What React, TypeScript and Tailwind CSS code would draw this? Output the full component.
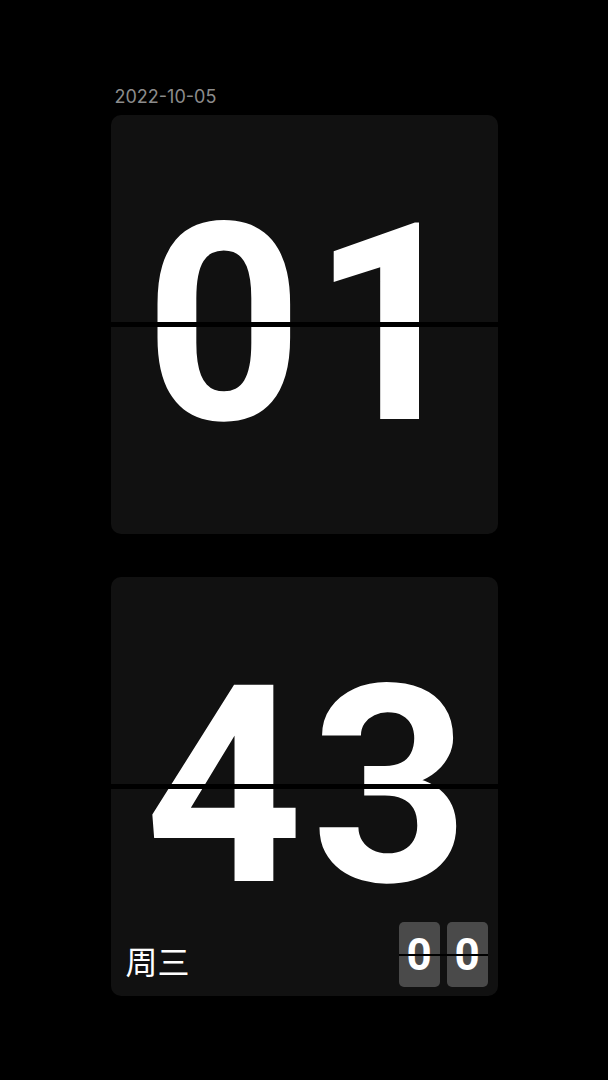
import React from 'react';

const FlipCard = ({ value, children }: { value: string; children?: React.ReactNode }) => (
  <div className="relative flex h-[419px] w-full items-center justify-center overflow-hidden rounded-[10px] bg-[#111111]">
    <span className="pt-[1px] pl-[14px] font-['Roboto',sans-serif] text-[276px] leading-none font-bold tracking-[8px] text-white">
      {value}
    </span>
    <div className="absolute top-[207px] right-0 left-0 h-[5px] bg-black" />
    {children}
  </div>
);

const MiniDigit = ({ value }: { value: string }) => (
  <div className="flex h-[65px] w-[41px] items-center justify-center rounded-[5px] bg-[#4a4a4a]">
    <span className="font-['Roboto',sans-serif] text-[44px] leading-none font-bold text-white">
      {value}
    </span>
  </div>
);

export default function App() {
  return (
    <div className="min-h-[1080px] w-full bg-black pt-[87px]">
      <div className="mx-auto flex w-[387px] flex-col">
        <div className="mb-[8px] ml-[4px] font-['Inter',sans-serif] text-[18px] leading-[20px] text-[#8c8c8c]">
          2022-10-05
        </div>
        <FlipCard value="01" />
        <div className="mt-[43px]">
          <FlipCard value="43">
            <div className="absolute right-[10px] bottom-[9px] left-[15px] flex items-center justify-between">
              <span className="mt-[10px] font-['Noto_Sans_CJK_SC',sans-serif] text-[32px] leading-none text-white">
                周三
              </span>
              <div className="relative flex gap-[7px]">
                <MiniDigit value="0" />
                <MiniDigit value="0" />
                <div className="absolute top-[32px] right-0 left-0 h-[2px] bg-black" />
              </div>
            </div>
          </FlipCard>
        </div>
      </div>
    </div>
  );
}
